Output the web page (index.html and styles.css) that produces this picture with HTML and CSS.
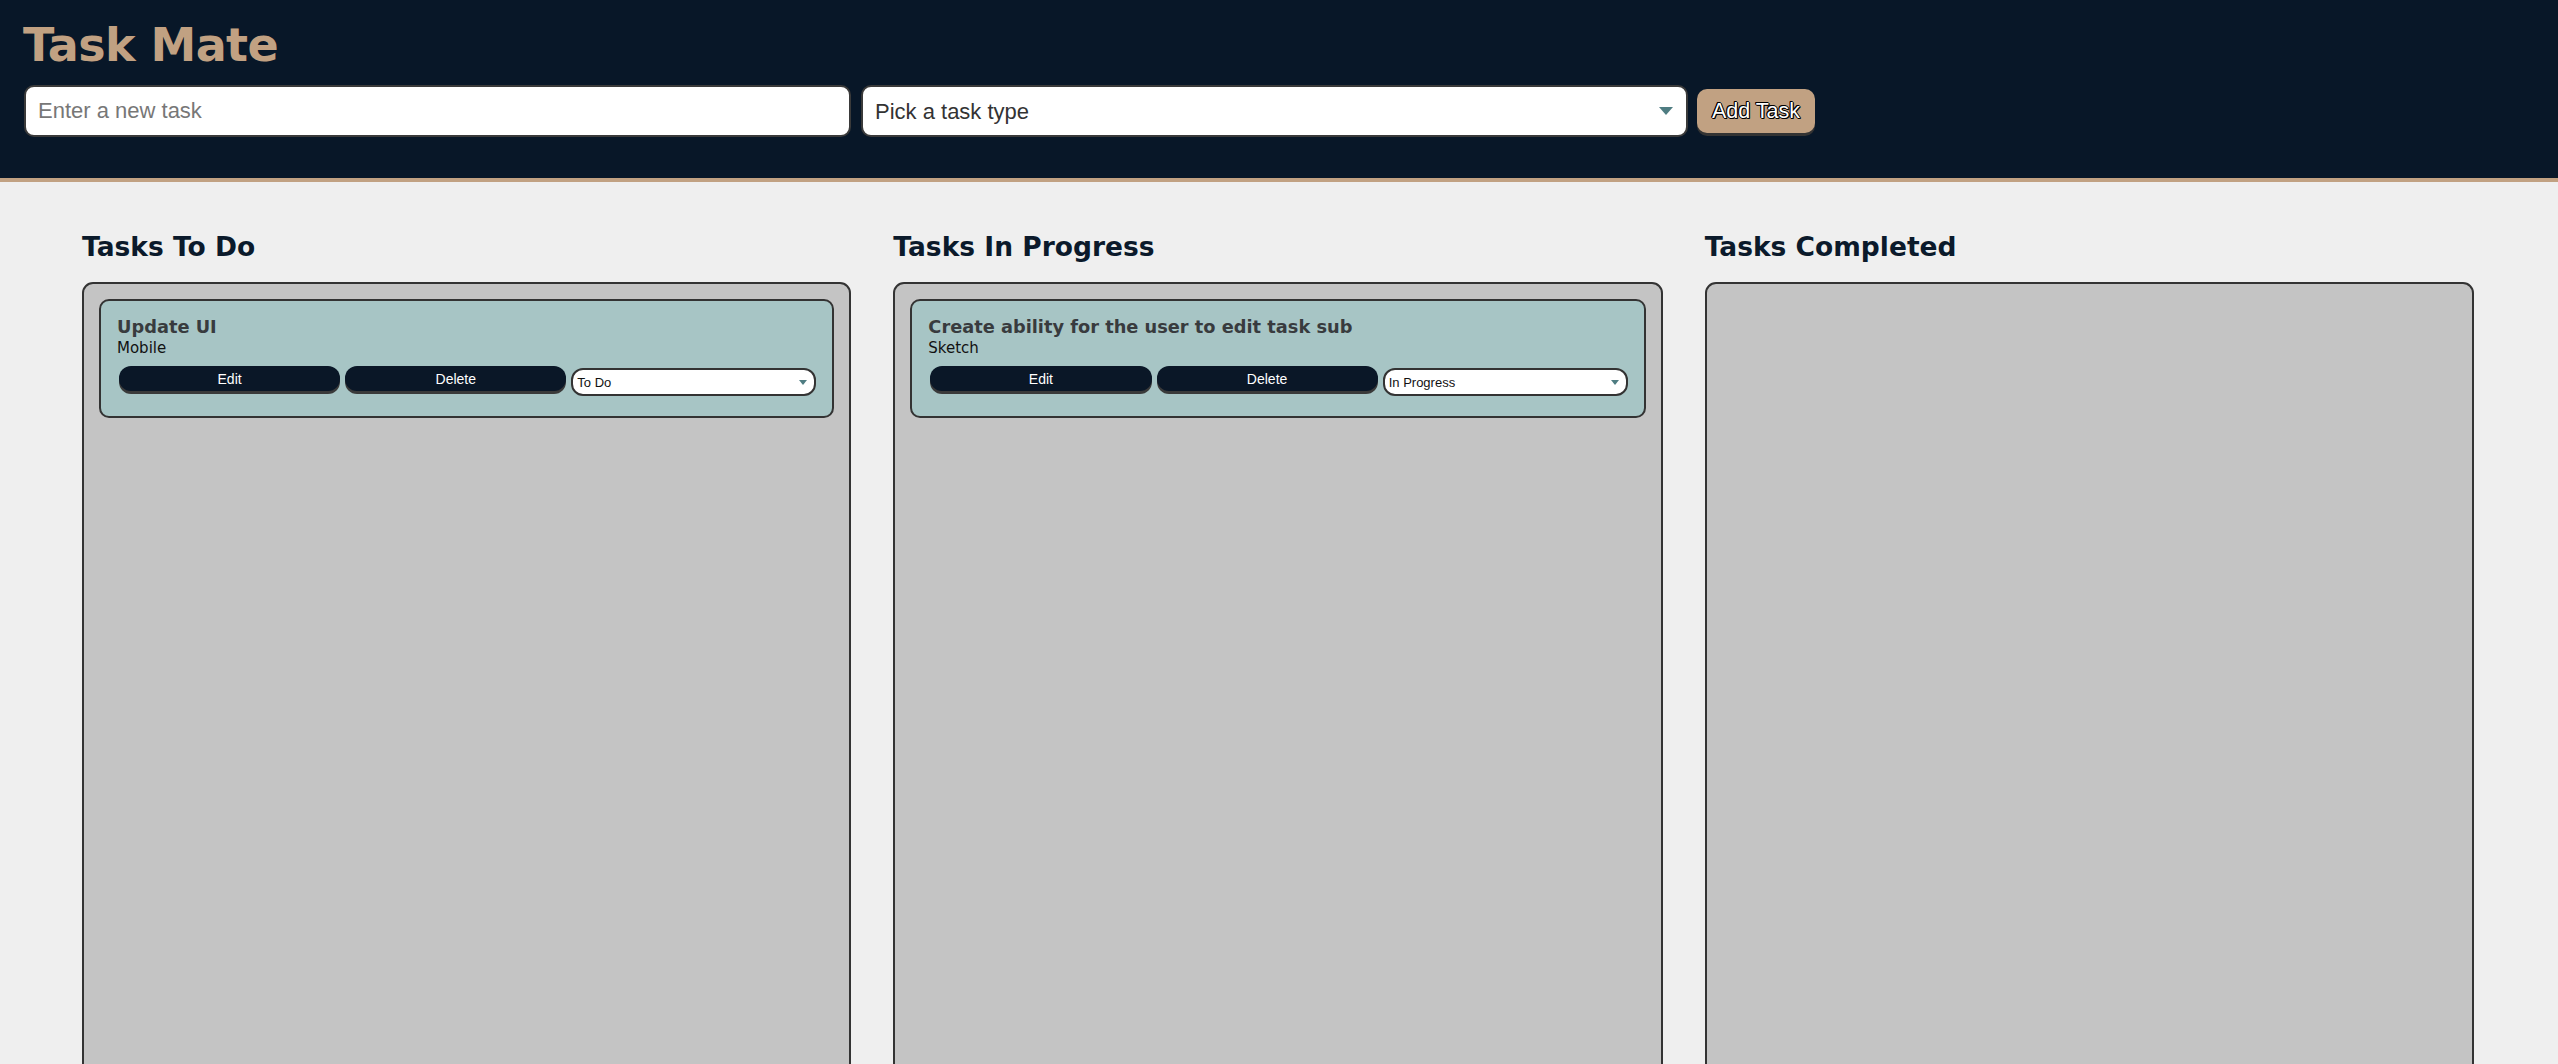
FILE: index.html
```html
<!DOCTYPE html>
<html lang="en">
<head>
<meta charset="utf-8">
<title>Task Mate</title>
<link rel="stylesheet" href="styles.css">
</head>
<body>
<header class="topbar">
  <h1 class="brand">Task Mate</h1>
  <form class="task-form">
    <input class="task-input" type="text" placeholder="Enter a new task">
    <span class="select-wrap big">
      <select class="type-select">
        <option>Pick a task type</option>
        <option>Mobile</option>
        <option>Sketch</option>
      </select>
    </span>
    <button class="add-btn" type="button">Add Task</button>
  </form>
</header>
<main class="board">
  <section class="column">
    <h2 class="column-title">Tasks To Do</h2>
    <div class="lane">
      <div class="card">
        <h3 class="card-title">Update UI</h3>
        <p class="card-type">Mobile</p>
        <div class="card-actions">
          <button class="card-btn" type="button">Edit</button>
          <button class="card-btn" type="button">Delete</button>
          <span class="select-wrap small">
            <select class="status-select">
              <option>To Do</option>
              <option>In Progress</option>
              <option>Completed</option>
            </select>
          </span>
        </div>
      </div>
    </div>
  </section>
  <section class="column">
    <h2 class="column-title">Tasks In Progress</h2>
    <div class="lane">
      <div class="card">
        <h3 class="card-title">Create ability for the user to edit task sub</h3>
        <p class="card-type">Sketch</p>
        <div class="card-actions">
          <button class="card-btn" type="button">Edit</button>
          <button class="card-btn" type="button">Delete</button>
          <span class="select-wrap small">
            <select class="status-select">
              <option>In Progress</option>
              <option>To Do</option>
              <option>Completed</option>
            </select>
          </span>
        </div>
      </div>
    </div>
  </section>
  <section class="column">
    <h2 class="column-title">Tasks Completed</h2>
    <div class="lane"></div>
  </section>
</main>
</body>
</html>
```

FILE: styles.css
```css
html, body {
  margin: 0;
  padding: 0;
}
body {
  background: #efefef;
  font-family: "DejaVu Sans", Verdana, sans-serif;
}
.topbar {
  background: #081728;
  border-bottom: 4px solid #c1a182;
  padding: 18px 24px 41px 24px;
}
.brand {
  margin: 0 0 13px -1px;
  font-family: "DejaVu Sans", Verdana, sans-serif;
  font-weight: bold;
  font-size: 46px;
  line-height: 54px;
  letter-spacing: -0.6px;
  color: #c1a182;
}
.task-form {
  display: flex;
  align-items: flex-start;
  margin: 0;
}
.task-input {
  box-sizing: border-box;
  width: 827px;
  height: 52px;
  margin: 0 10px 0 0;
  padding: 0 12px;
  border: 2px solid #3a3a3a;
  border-radius: 10px;
  background: #fff;
  font-family: "Liberation Sans", Arial, sans-serif;
  font-size: 22px;
  color: #222;
  outline: none;
}
.task-input::placeholder {
  color: #777;
}
.select-wrap {
  position: relative;
  display: inline-block;
}
.select-wrap::after {
  content: "";
  position: absolute;
  top: 50%;
  width: 0;
  height: 0;
  border-style: solid;
  border-color: #4f7d82 transparent transparent transparent;
  pointer-events: none;
}
.select-wrap.big {
  margin-right: 9px;
}
.select-wrap.big::after {
  right: 15px;
  margin-top: -4px;
  border-width: 8px 7px 0 7px;
}
.type-select {
  box-sizing: border-box;
  width: 827px;
  height: 52px;
  padding: 0 12px;
  border: 2px solid #3a3a3a;
  border-radius: 10px;
  background: #fff;
  font-family: "Liberation Sans", Arial, sans-serif;
  font-size: 22px;
  color: #333;
  -webkit-appearance: none;
  appearance: none;
  outline: none;
}
.add-btn {
  box-sizing: border-box;
  width: 118px;
  height: 44px;
  margin-top: 4px;
  padding: 0;
  border: none;
  border-radius: 10px;
  background: #c1a182;
  box-shadow: 0 3px 0 #333;
  font-family: "Liberation Sans", Arial, sans-serif;
  font-size: 21.5px;
  color: #fff;
  text-shadow: -1px 0 0 #000, 0 1px 0 #000, 1px 0 0 #000, 0 -1px 0 #000,
    -1px -1px 0 #000, 1px 1px 0 #000;
}
.board {
  display: flex;
  gap: 42px;
  padding: 50px 84px 0 82px;
}
.column {
  flex: 1;
  min-width: 0;
}
.column-title {
  margin: 0 0 20px 0;
  font-family: "DejaVu Sans", Verdana, sans-serif;
  font-weight: bold;
  font-size: 26.5px;
  line-height: 30px;
  color: #0b1a2b;
}
.lane {
  box-sizing: border-box;
  min-height: 900px;
  background: #c4c4c4;
  border: 2px solid #333;
  border-radius: 11px;
  padding: 15px 15px;
}
.card {
  background: #a7c5c5;
  border: 2px solid #333;
  border-radius: 10px;
  padding: 15px 16px 20px 16px;
}
.card-title {
  margin: 0;
  font-family: "DejaVu Sans", Verdana, sans-serif;
  font-weight: bold;
  font-size: 17.8px;
  line-height: 21px;
  color: #383b3e;
}
.card-type {
  margin: 2px 0 0 0;
  font-family: "DejaVu Sans", Verdana, sans-serif;
  font-size: 15px;
  line-height: 18px;
  color: #111;
}
.card-actions {
  display: flex;
  align-items: flex-start;
  gap: 5px;
  margin-top: 9px;
  padding-left: 2px;
}
.card-btn {
  flex: 1;
  height: 25px;
  padding: 0;
  border: none;
  border-radius: 12px;
  background: #0a1727;
  box-shadow: 0 3px 0 #3a3a3a;
  font-family: "Liberation Sans", Arial, sans-serif;
  font-size: 14px;
  color: #fff;
}
.select-wrap.small {
  flex: 0 0 245px;
  margin-top: 2px;
}
.select-wrap.small::after {
  right: 9px;
  margin-top: -2px;
  border-width: 5px 4.5px 0 4.5px;
}
.status-select {
  box-sizing: border-box;
  width: 245px;
  height: 28px;
  padding: 0 4px;
  border: 2px solid #333;
  border-radius: 12px;
  background: #fff;
  font-family: "Liberation Sans", Arial, sans-serif;
  font-size: 13px;
  color: #111;
  -webkit-appearance: none;
  appearance: none;
  outline: none;
}
```
